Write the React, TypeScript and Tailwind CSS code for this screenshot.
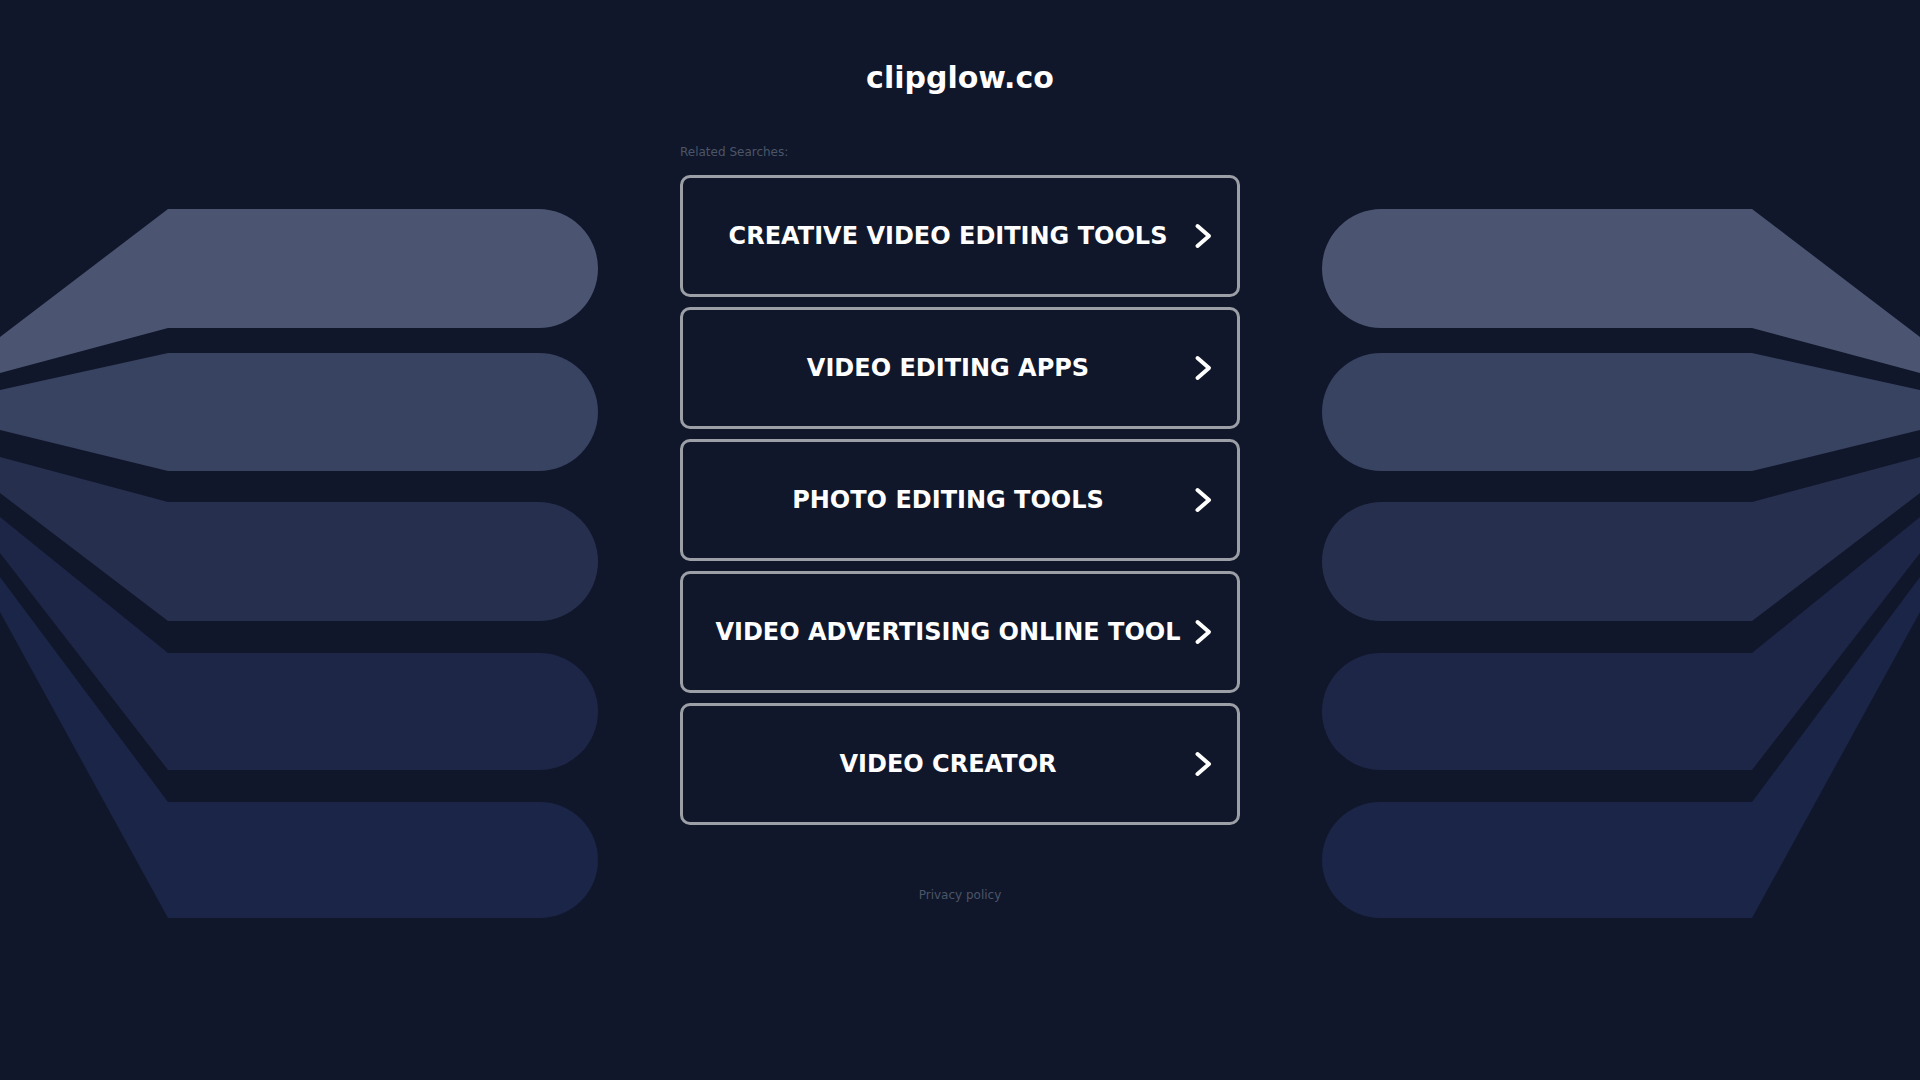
import React from "react";

const items = [
  "CREATIVE VIDEO EDITING TOOLS",
  "VIDEO EDITING APPS",
  "PHOTO EDITING TOOLS",
  "VIDEO ADVERTISING ONLINE TOOL",
  "VIDEO CREATOR",
];

type Band = { T: number; B: number; t0: number; b0: number; fill: string };

const bands: Band[] = [
  { T: 209, B: 328, t0: 337, b0: 373, fill: "#4b5572" },
  { T: 353, B: 471, t0: 390, b0: 430, fill: "#384261" },
  { T: 502, B: 621, t0: 457, b0: 493, fill: "#262f4e" },
  { T: 653, B: 770, t0: 517, b0: 553, fill: "#1d2647" },
  { T: 802, B: 918, t0: 577, b0: 612, fill: "#1b2547" },
];

function bandPath(b: Band) {
  const r = (b.B - b.T) / 2;
  const xr = 598 - r;
  return `M 0 ${b.t0} L 168 ${b.T} L ${xr} ${b.T} A ${r} ${r} 0 0 1 ${xr} ${b.B} L 168 ${b.B} L 0 ${b.b0} Z`;
}

function Background() {
  return (
    <svg
      className="absolute inset-0 h-full w-full"
      viewBox="0 0 1920 1080"
      preserveAspectRatio="none"
      aria-hidden="true"
    >
      <g>
        {bands.map((b, i) => (
          <path key={i} d={bandPath(b)} fill={b.fill} />
        ))}
      </g>
      <g transform="translate(1920,0) scale(-1,1)">
        {bands.map((b, i) => (
          <path key={i} d={bandPath(b)} fill={b.fill} />
        ))}
      </g>
    </svg>
  );
}

function Chevron() {
  return (
    <svg width="24" height="28" viewBox="0 0 24 28" fill="none" aria-hidden="true">
      <path
        d="M6.5 4 L18 14 L6.5 24"
        stroke="#ffffff"
        strokeWidth="4"
        strokeLinecap="round"
        strokeLinejoin="round"
      />
    </svg>
  );
}

export default function App() {
  return (
    <div className="relative h-screen w-full overflow-hidden bg-[#10172a] font-['DejaVu_Sans','Liberation_Sans',sans-serif]">
      <Background />
      <div className="relative flex flex-col items-center pt-[60px]">
        <h1 className="text-[30px] leading-[36px] font-bold text-white">clipglow.co</h1>
        <div className="mt-[49px] w-[560px]">
          <p className="text-[12px] leading-[14px] text-[#4b5568]">Related Searches:</p>
          <div className="mt-[16px] flex flex-col gap-[10px]">
            {items.map((t) => (
              <a
                key={t}
                href="#"
                className="flex h-[122px] items-center rounded-[10px] border-[3px] border-[#9c9fa6] px-[22px] text-white"
              >
                <span className="flex-1 text-center text-[24px] leading-[28px] font-bold">{t}</span>
                <span className="flex w-[24px] items-center justify-center">
                  <Chevron />
                </span>
              </a>
            ))}
          </div>
        </div>
        <a href="#" className="mt-[63px] text-[12px] leading-[14px] text-[#4b5568]">
          Privacy policy
        </a>
      </div>
    </div>
  );
}
